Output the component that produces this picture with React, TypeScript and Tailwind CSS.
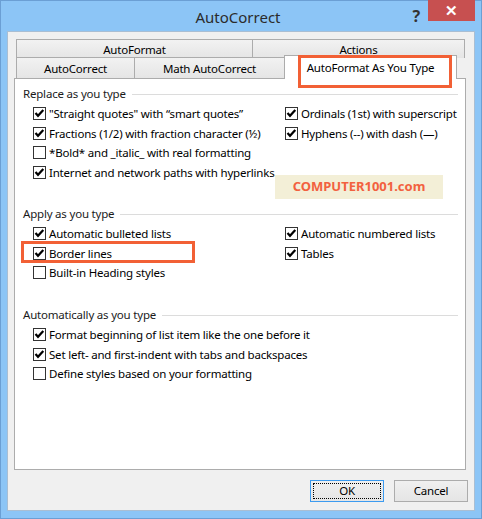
import React from 'react';

function Box({ checked }: { checked: boolean }) {
  return (
    <span className="flex h-[13px] w-[13px] shrink-0 items-center justify-center border border-[#333333] bg-white">
      {checked && (
        <svg width="11" height="11" viewBox="0 0 11 11">
          <path d="M1.5 5 L4 7.8 L9.3 2" fill="none" stroke="#000" strokeWidth="2.2" />
        </svg>
      )}
    </span>
  );
}

function Check({ label, checked = true }: { label: string; checked?: boolean }) {
  return (
    <div className="flex h-[19.5px] items-center gap-[3px] whitespace-nowrap">
      <Box checked={checked} />
      <span>{label}</span>
    </div>
  );
}

function Heading({ text }: { text: string }) {
  return (
    <div className="flex h-[20px] items-center gap-[6px] pr-[7px]">
      <span className="text-[#1b1b1b]">{text}</span>
      <div className="h-px flex-1 bg-[#dcdcdc]" />
    </div>
  );
}

const tab =
  'flex justify-center border border-b-0 border-[#acacac] bg-gradient-to-b from-[#f2f2f2] to-[#e5e5e5]';

export default function App() {
  return (
    <main className="flex h-[519px] w-[482px] flex-col border border-[#6b9fd4] bg-[#8cc5f6] font-['Segoe_UI','Noto_Sans',sans-serif] text-[11.5px] tracking-[-0.2px] text-black">
      {/* title bar */}
      <header className="flex h-[30px] items-start tracking-normal">
        <div className="flex-1" />
        <div className="pt-[5px] text-[15px] text-[#2b2b2b]">AutoCorrect</div>
        <div className="flex flex-1 justify-end gap-[8px] pr-[6px]">
          <span className="pt-[3px] text-[16px] font-bold text-[#333]">?</span>
          <div className="-mt-px flex h-[21px] w-[47px] items-center justify-center bg-[#c75050] text-[15px] font-bold text-white">
            ✕
          </div>
        </div>
      </header>

      {/* client area */}
      <section className="mx-[6px] flex h-[480px] flex-col border border-[#a9bed3] bg-[#f0f0f0] pl-[6px] pt-[7px]">
        {/* tabs */}
        <div className="relative flex flex-col">
          <div className="ml-[2px] flex h-[19px]">
            <div className={`${tab} w-[237px] pt-[1px]`}>AutoFormat</div>
            <div className={`${tab} -ml-px w-[213px] pt-[1px]`}>Actions</div>
          </div>
          <div className="relative z-10 -mb-px ml-[2px] flex h-[21px] items-end">
            <div className={`${tab} mb-px h-[21px] w-[119px] pt-[2px]`}>AutoCorrect</div>
            <div className={`${tab} -ml-px mb-px h-[21px] w-[151px] pt-[2px]`}>Math AutoCorrect</div>
            <div className="-ml-px flex h-[24px] w-[173px] items-start justify-center border border-b-0 border-[#acacac] bg-white pt-[3px]">
              AutoFormat As You Type
            </div>
          </div>
          <div className="absolute left-[284px] top-[16px] z-20 h-[33px] w-[154px] border-[3px] border-[#f26035]" />
        </div>

        {/* panel */}
        <div className="flex h-[392px] w-[452px] flex-col border border-[#acacac] bg-white pl-[8px] pt-[5px]">
          <Heading text="Replace as you type" />
          <div className="flex">
            <div className="w-[262px] pl-[10px]">
              <Check label={'"Straight quotes" with \u201csmart quotes\u201d'} />
              <Check label="Fractions (1/2) with fraction character (½)" />
              <Check label="*Bold* and _italic_ with real formatting" checked={false} />
              <Check label="Internet and network paths with hyperlinks" />
            </div>
            <div className="flex flex-col">
              <Check label="Ordinals (1st) with superscript" />
              <Check label="Hyphens (--) with dash (—)" />
              <div className="-ml-[10px] mt-[32px] flex h-[24px] w-[168px] items-center justify-center bg-[#f3efd7] font-['Noto_Sans',sans-serif] text-[13px] font-bold tracking-normal text-[#f2613f]">
                COMPUTER1001.com
              </div>
            </div>
          </div>

          <div className="mt-[5px]">
            <Heading text="Apply as you type" />
          </div>
          <div className="flex">
            <div className="w-[262px] pl-[10px]">
              <Check label="Automatic bulleted lists" />
              <div className="relative">
                <Check label="Border lines" />
                <div className="absolute -left-[12px] top-[-2.5px] h-[22px] w-[174px] border-[3px] border-[#f26035]" />
              </div>
              <Check label="Built-in Heading styles" checked={false} />
            </div>
            <div>
              <Check label="Automatic numbered lists" />
              <Check label="Tables" />
            </div>
          </div>

          <div className="mt-[22.5px]">
            <Heading text="Automatically as you type" />
          </div>
          <div className="pl-[10px]">
            <Check label="Format beginning of list item like the one before it" />
            <Check label="Set left- and first-indent with tabs and backspaces" />
            <Check label="Define styles based on your formatting" checked={false} />
          </div>
        </div>

        {/* buttons */}
        <div className="mt-[10px] flex justify-end gap-[10px] pr-[6px]">
          <button className="flex h-[22px] w-[74px] items-center justify-center border border-[#3c9bf0] bg-gradient-to-b from-[#f0f0f0] to-[#e5e5e5] p-[2px]">
            <span className="flex h-full w-full items-center justify-center border border-dotted border-black">OK</span>
          </button>
          <button className="flex h-[22px] w-[74px] items-center justify-center border border-[#acacac] bg-gradient-to-b from-[#f0f0f0] to-[#e5e5e5]">
            Cancel
          </button>
        </div>
      </section>
    </main>
  );
}
